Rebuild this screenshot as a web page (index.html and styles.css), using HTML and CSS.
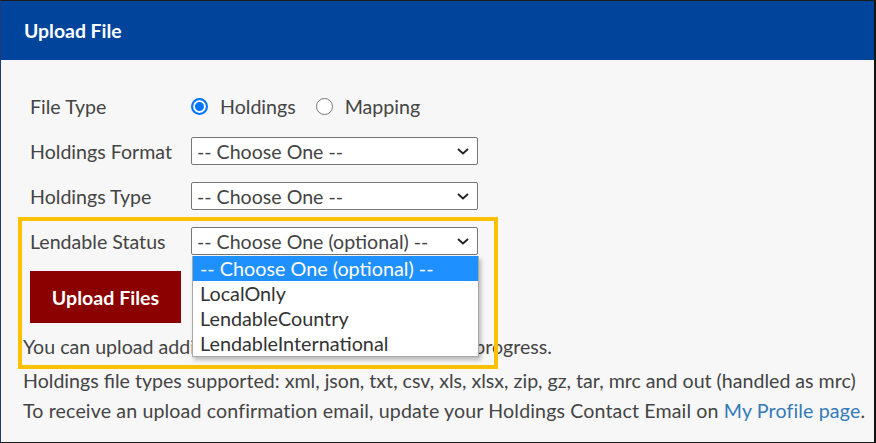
FILE: index.html
```html
<!DOCTYPE html>
<html lang="en">
<head>
    <meta charset="UTF-8">
    <meta name="viewport" content="width=device-width, initial-scale=1.0">
    <title>Upload File</title>
    <link rel="stylesheet" href="styles.css">
</head>
<body>
    <div class="panel">
        <div class="panel-heading">Upload File</div>

        <div class="panel-body">
            <form class="upload-form">
                <div class="form-row">
                    <span class="form-label">File Type</span>
                    <label class="radio-option">
                        <span class="radio checked"></span>Holdings
                    </label>
                    <label class="radio-option">
                        <span class="radio"></span>Mapping
                    </label>
                </div>

                <div class="form-row">
                    <span class="form-label">Holdings Format</span>
                    <div class="select">
                        <span>-- Choose One --</span>
                        <svg class="chevron" width="12" height="7" viewBox="0 0 12 7"><path d="M1 1l5 4.5L11 1" fill="none" stroke="#222" stroke-width="1.8"/></svg>
                    </div>
                </div>

                <div class="form-row">
                    <span class="form-label">Holdings Type</span>
                    <div class="select">
                        <span>-- Choose One --</span>
                        <svg class="chevron" width="12" height="7" viewBox="0 0 12 7"><path d="M1 1l5 4.5L11 1" fill="none" stroke="#222" stroke-width="1.8"/></svg>
                    </div>
                </div>

                <div class="form-row">
                    <span class="form-label">Lendable Status</span>
                    <div class="select open">
                        <span>-- Choose One (optional) --</span>
                        <svg class="chevron" width="12" height="7" viewBox="0 0 12 7"><path d="M1 1l5 4.5L11 1" fill="none" stroke="#222" stroke-width="1.8"/></svg>
                        <!-- open option list -->
                        <ul class="options">
                            <li class="selected">-- Choose One (optional) --</li>
                            <li>LocalOnly</li>
                            <li>LendableCountry</li>
                            <li>LendableInternational</li>
                        </ul>
                    </div>
                </div>

                <button type="button" class="btn-upload">Upload Files</button>
            </form>

            <p class="note first">You can upload additional files while the upload is in progress.</p>
            <p class="note">Holdings file types supported: xml, json, txt, csv, xls, xlsx, zip, gz, tar, mrc and out (handled as mrc)</p>
            <p class="note last">To receive an upload confirmation email, update your Holdings Contact Email on <a href="#">My Profile page</a>.</p>
        </div>

        <div class="callout"></div>
    </div>
</body>
</html>
```

FILE: styles.css
```css
/* upload panel */
body {
    margin: 0;
    font-family: Lato, "Open Sans", Arial, sans-serif;
    background-color: #f7f7f7;
}

.panel {
    position: relative;
    height: 441px;
    border: 1px solid #1b1b1b;
    border-left-color: #1d3b70;
    border-right: 2px solid #111;
    background-color: #f7f7f7;
    overflow: hidden;
}

.panel-heading {
    height: 59px;
    line-height: 59px;
    padding-left: 23px;
    background-color: #00449b;
    color: #fff;
    font-size: 19.4px;
    font-weight: bold;
}

.panel-body {
    padding: 32px 0 0 22px;
    color: #444;
    font-size: 19.6px;
}

.upload-form {
    margin-left: 7px;
}

.form-row {
    display: flex;
    align-items: center;
    height: 28px;
    margin-bottom: 17px;
}

.form-label {
    width: 161px;
    flex-shrink: 0;
}

.radio-option {
    display: flex;
    align-items: center;
    margin-right: 20px;
}

.radio {
    box-sizing: border-box;
    width: 17px;
    height: 17px;
    margin-right: 12px;
    border: 1px solid #767676;
    border-radius: 50%;
    background-color: #fff;
}

.radio.checked {
    border: 2px solid #0075ff;
    box-shadow: inset 0 0 0 2px #fff, inset 0 0 0 8px #0075ff;
}

.select {
    position: relative;
    box-sizing: border-box;
    display: flex;
    align-items: center;
    justify-content: space-between;
    width: 287px;
    height: 28px;
    padding: 0 8px 0 5px;
    border: 1px solid #767676;
    border-radius: 2px;
    background-color: #fff;
    color: #444;
}

.options {
    position: absolute;
    top: 28px;
    left: 0;
    width: 285px;
    margin: 0;
    padding: 0;
    list-style: none;
    background-color: #fff;
    border: 1px solid #a9a9a9;
    border-top: none;
    box-shadow: 2px 3px 4px rgba(0, 0, 0, 0.25);
    z-index: 2;
    font-size: 19.8px;
}

.options li {
    height: 25px;
    line-height: 25px;
    padding-left: 7px;
    color: #333;
}

.options li.selected {
    background-color: #1e90ff;
    color: #fff;
}

.btn-upload {
    display: block;
    width: 151px;
    height: 52px;
    margin-top: -1px;
    border: none;
    border-radius: 0;
    background-color: #8b0000;
    color: #fff;
    font-family: inherit;
    font-size: 19.6px;
    font-weight: bold;
}

.note {
    margin: 0;
    line-height: 29px;
    white-space: nowrap;
}

.note.first {
    margin-top: 9px;
    margin-bottom: 5px;
}

.note.last {
    margin-top: 1px;
    letter-spacing: 0.007em;
}

.note a {
    color: #337ab7;
    text-decoration: none;
}

/* highlight frame around the lendable status field */
.callout {
    position: absolute;
    left: 17px;
    top: 216px;
    width: 472px;
    height: 144px;
    border: 4px solid #ffc000;
    pointer-events: none;
}
```
